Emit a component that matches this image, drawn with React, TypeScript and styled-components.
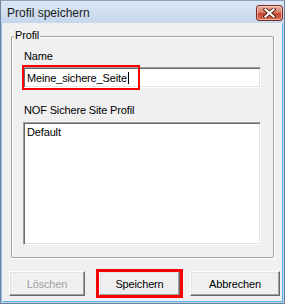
import React from 'react';
import styled, { createGlobalStyle } from 'styled-components';

const GlobalStyle = createGlobalStyle`
  html, body {
    margin: 0;
    padding: 0;
    background: #ffffff;
  }
  body {
    font-family: "Liberation Sans", Arial, sans-serif;
  }
`;

const Window = styled.div`
  box-sizing: border-box;
  width: 285px;
  height: 304px;
  display: flex;
  flex-direction: column;
  background: #bfd2e8;
  border: 1px solid #6c83a0;
  border-top-color: #8aa3c0;
`;

const TitleBar = styled.div`
  height: 22px;
  flex: none;
  display: flex;
  align-items: center;
  justify-content: space-between;
  padding: 0 1px 0 6px;
  background: linear-gradient(#dbe6f4, #c5d7ec);
`;

const Title = styled.span`
  font-size: 12px;
  color: #1b1b1b;
  margin-top: 1px;
`;

const CloseButton = styled.div`
  box-sizing: border-box;
  width: 27px;
  height: 16px;
  margin-top: 1px;
  display: flex;
  align-items: center;
  justify-content: center;
  border: 1px solid #7d2a1c;
  border-radius: 3px;
  background: linear-gradient(#eab1a3 0%, #d9806a 45%, #c2452c 55%, #d7735a 100%);
  box-shadow: inset 0 0 0 1px rgba(255, 220, 210, 0.6);
`;

const Body = styled.div`
  flex: 1;
  display: flex;
  flex-direction: column;
  margin: 0 2px 2px 1px;
  padding: 13px 8px 0 9px;
  background: #f0f0f0;
  box-shadow: 1px 1px 0 #4db6ec, -1px 0 0 #8fbfe4;
  font-size: 11px;
  letter-spacing: -0.15px;
  color: #000;
`;

const GroupBox = styled.div`
  position: relative;
  display: flex;
  flex-direction: column;
  padding: 13px 12px 12px 11px;
  border: 1px solid #a0a0a0;
  border-radius: 2px;
  box-shadow: inset 1px 1px 0 #fff, 1px 1px 0 #fff;
`;

const Caption = styled.span`
  position: absolute;
  top: -8px;
  left: 2px;
  padding: 0 1px;
  background: #f0f0f0;
  line-height: 13px;
`;

const Label = styled.div<{ $gap: number }>`
  line-height: 13px;
  padding-left: 1px;
  margin-bottom: ${p => p.$gap}px;
`;

const FieldWrap = styled.div`
  position: relative;
  margin-bottom: 16px;
`;

const Sunken = styled.div`
  box-sizing: border-box;
  background: #fff;
  border: 1px solid;
  border-color: #a0a0a0 #fff #fff #a0a0a0;
  box-shadow: inset 1px 1px 0 #696969, inset -1px -1px 0 #e3e3e3;
`;

const TextBox = styled(Sunken)`
  height: 21px;
  display: flex;
  align-items: center;
  padding-left: 3px;
`;

const Caret = styled.span`
  display: inline-block;
  width: 1px;
  height: 12px;
  margin-left: 1px;
  background: #000;
`;

const ListBox = styled(Sunken)`
  height: 123px;
  padding: 3px 3px;
  line-height: 13px;
`;

const Highlight = styled.div<{ $left: number; $top: number; $w: number; $h: number; $t: number }>`
  position: absolute;
  box-sizing: border-box;
  left: ${p => p.$left}px;
  top: ${p => p.$top}px;
  width: ${p => p.$w}px;
  height: ${p => p.$h}px;
  border: ${p => p.$t}px solid #ff0000;
  pointer-events: none;
`;

const ButtonRow = styled.div`
  display: flex;
  align-items: center;
  margin: 13px 0 0 -2px;
`;

const ButtonSlot = styled.div<{ $gap: number }>`
  position: relative;
  margin-right: ${p => p.$gap}px;
`;

const Button = styled.div<{ $w: number; $disabled?: boolean }>`
  box-sizing: border-box;
  width: ${p => p.$w}px;
  height: 25px;
  display: flex;
  align-items: center;
  justify-content: center;
  background: #f0f0f0;
  border: 1px solid;
  border-color: #fff #696969 #696969 #fff;
  box-shadow: inset -1px -1px 0 #a0a0a0, inset 1px 1px 0 #e3e3e3;
  color: ${p => (p.$disabled ? '#a0a0a0' : '#000')};
  font-size: 11px;
`;

const CloseIcon = () => (
  <svg width="13" height="10" viewBox="0 0 13 10">
    <path d="M2.5 1.5 L10.5 8.5 M10.5 1.5 L2.5 8.5" stroke="#5a1a10" strokeWidth="4" strokeLinecap="square" />
    <path d="M2.5 1.5 L10.5 8.5 M10.5 1.5 L2.5 8.5" stroke="#fff" strokeWidth="2.2" strokeLinecap="square" />
  </svg>
);

const App: React.FC = () => (
  <>
    <GlobalStyle />
    <Window>
      <TitleBar>
        <Title>Profil speichern</Title>
        <CloseButton>
          <CloseIcon />
        </CloseButton>
      </TitleBar>
      <Body>
        <GroupBox>
          <Caption>Profil</Caption>
          <Label $gap={4}>Name</Label>
          <FieldWrap>
            <TextBox>
              Meine_sichere_Seite<Caret />
            </TextBox>
            <Highlight $left={-1} $top={-2} $w={118} $h={25} $t={2} />
          </FieldWrap>
          <Label $gap={5}>NOF Sichere Site Profil</Label>
          <ListBox>Default</ListBox>
        </GroupBox>
        <ButtonRow>
          <ButtonSlot $gap={14}>
            <Button $w={76} $disabled>Löschen</Button>
          </ButtonSlot>
          <ButtonSlot $gap={10}>
            <Button $w={81}>Speichern</Button>
            <Highlight $left={-3} $top={-2} $w={87} $h={29} $t={3} />
          </ButtonSlot>
          <ButtonSlot $gap={0}>
            <Button $w={90}>Abbrechen</Button>
          </ButtonSlot>
        </ButtonRow>
      </Body>
    </Window>
  </>
);

export default App;
